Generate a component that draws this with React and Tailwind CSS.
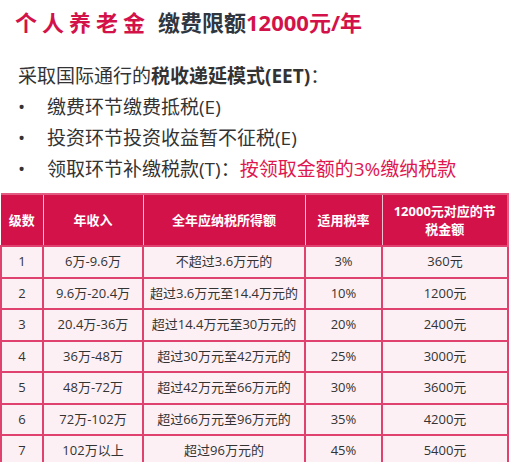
import React from "react";

const rows = [
  ["1", "6万-9.6万", "不超过3.6万元的", "3%", "360元"],
  ["2", "9.6万-20.4万", "超过3.6万元至14.4万元的", "10%", "1200元"],
  ["3", "20.4万-36万", "超过14.4万元至30万元的", "20%", "2400元"],
  ["4", "36万-48万", "超过30万元至42万元的", "25%", "3000元"],
  ["5", "48万-72万", "超过42万元至66万元的", "30%", "3600元"],
  ["6", "72万-102万", "超过66万元至96万元的", "35%", "4200元"],
  ["7", "102万以上", "超过96万元的", "45%", "5400元"],
];

const font = { fontFamily: '"Open Sans", "Noto Sans CJK SC", sans-serif' };

export default function App() {
  return (
    <div className="w-[524px] h-[462px] bg-white overflow-hidden" style={font}>
      <div className="pt-[7px] pl-[15px] text-[22px] leading-[30px] font-bold whitespace-nowrap">
        <span className="text-[#d3124a] tracking-[5px]">个人养老金</span>
        <span className="ml-[8px] text-[#2f3640]">缴费限额</span>
        <span className="text-[#d3124a]">12000元/年</span>
      </div>

      <div className="mt-[24px] pl-[18px] text-[19px] leading-[31px] text-[#333] whitespace-nowrap">
        <div>
          采取国际通行的<span className="font-bold">税收递延模式(EET)</span>：
        </div>
        <div className="flex">
          <span className="w-[29px]">•</span>
          <span>缴费环节缴费抵税(E)</span>
        </div>
        <div className="flex">
          <span className="w-[29px]">•</span>
          <span>投资环节投资收益暂不征税(E)</span>
        </div>
        <div className="flex">
          <span className="w-[29px]">•</span>
          <span>
            领取环节补缴税款(T)：<span className="text-[#e0174f]">按领取金额的3%缴纳税款</span>
          </span>
        </div>
      </div>

      <table className="mt-[8px] w-[507px] border-collapse table-fixed text-[13px] text-[#333]">
        <colgroup>
          <col className="w-[42px]" />
          <col className="w-[100px]" />
          <col className="w-[162px]" />
          <col className="w-[77px]" />
          <col className="w-[126px]" />
        </colgroup>
        <thead>
          <tr className="h-[52px] bg-[#d3124a] text-white font-bold leading-[18px]">
            <th className="border-t-2 border-r border-[#e35b80] border-r-[#f2c3d0] font-bold">级数</th>
            <th className="border-t-2 border-r border-[#e35b80] border-r-[#f2c3d0] font-bold">年收入</th>
            <th className="border-t-2 border-r border-[#e35b80] border-r-[#f2c3d0] font-bold">全年应纳税所得额</th>
            <th className="border-t-2 border-r border-[#e35b80] border-r-[#f2c3d0] font-bold">适用税率</th>
            <th className="border-t-2 border-r-2 border-[#e35b80] font-bold px-2">12000元对应的节税金额</th>
          </tr>
        </thead>
        <tbody>
          {rows.map((r) => (
            <tr key={r[0]} className="h-[31.5px] bg-[#fdf0f4]">
              {r.map((c, i) => (
                <td key={i} className="border-2 border-[#e0426f] text-center whitespace-nowrap">
                  {c}
                </td>
              ))}
            </tr>
          ))}
        </tbody>
      </table>
    </div>
  );
}
